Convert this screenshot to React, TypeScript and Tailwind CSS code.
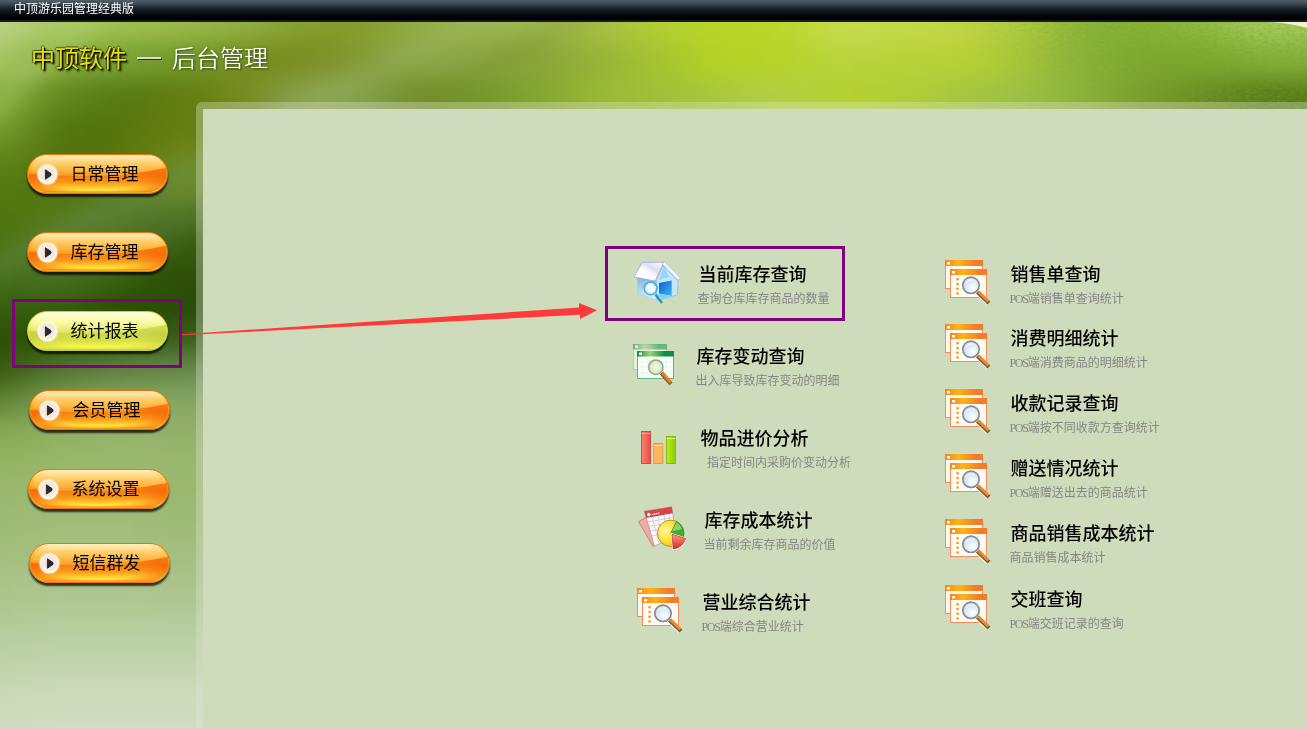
import type { ReactNode } from "react";
import clsx from "clsx";

type MenuItem = { label: string; place: string; active?: boolean };

type Report = {
  title: string;
  desc: string;
  pos?: boolean;
  icon: ReactNode;
  row: string;
  text: string;
  descShift?: string;
};

const menu: MenuItem[] = [
  { label: "日常管理", place: "mt-[52px] ml-[27px]" },
  { label: "库存管理", place: "mt-[38px] ml-[27px]" },
  { label: "统计报表", place: "mt-[39px] ml-[27px]", active: true },
  { label: "会员管理", place: "mt-[39px] ml-[29px]" },
  { label: "系统设置", place: "mt-[39px] ml-[28px]" },
  { label: "短信群发", place: "mt-[34px] ml-[29px]" },
];

const stockReports: Report[] = [
  { title: "当前库存查询", desc: "查询仓库库存商品的数量", icon: <HouseIcon />, row: "h-[82px]", text: "ml-[17px]" },
  { title: "库存变动查询", desc: "出入库导致库存变动的明细", icon: <GreenWindowsIcon />, row: "h-[82px]", text: "ml-[15px]" },
  { title: "物品进价分析", desc: "指定时间内采购价变动分析", icon: <BarsIcon />, row: "h-[82px] pl-1", text: "ml-[15px]", descShift: "ml-[7.5px]" },
  { title: "库存成本统计", desc: "当前剩余库存商品的价值", icon: <PieIcon />, row: "h-[82px] pl-1.5", text: "ml-[17px]" },
  { title: "营业综合统计", desc: "端综合营业统计", pos: true, icon: <WindowsIcon />, row: "h-[82px] pl-1", text: "ml-[17px]" },
];

const salesReports: Report[] = [
  { title: "销售单查询", desc: "端销售单查询统计", pos: true, icon: <WindowsIcon />, row: "h-16", text: "ml-[17px]" },
  { title: "消费明细统计", desc: "端消费商品的明细统计", pos: true, icon: <WindowsIcon />, row: "h-[65px]", text: "ml-[17px]" },
  { title: "收款记录查询", desc: "端按不同收款方查询统计", pos: true, icon: <WindowsIcon />, row: "h-[65px]", text: "ml-[17px]" },
  { title: "赠送情况统计", desc: "端赠送出去的商品统计", pos: true, icon: <WindowsIcon />, row: "h-[65px]", text: "ml-[17px]" },
  { title: "商品销售成本统计", desc: "商品销售成本统计", icon: <WindowsIcon />, row: "h-[66px]", text: "ml-[17px]" },
  { title: "交班查询", desc: "端交班记录的查询", pos: true, icon: <WindowsIcon />, row: "h-16", text: "ml-[17px]" },
];

// Colour samples of the leaf backdrop, blended together by a blur
const headerTop = "#bcd284 #a9c95f #9fc14e #9aba48 #92b040 #85a02e #8aa232 #93ac40 #9bb350 #a0b850 #a9bf45 #b4ce30 #bbd628 #bad628 #c8dc50 #c4da48 #c2d445 #b0cc40 #8ab43a #84b234 #8fbb40 #a6cc5c".split(" ");
const headerMid = "#a8c566 #88ae3c #78a232 #719a2a #738f22 #7f9028 #829832 #8ba64a #8ba645 #8aa438 #96b438 #a6c430 #b6d225 #b8d32a #bad440 #b8d23c #b8d235 #a8c63a #8bb23c #7caa32 #7aa82e #84b03c".split(" ");
const headerLow = "#8aae3e #628820 #567a14 #617d12 #788c20 #87a04c #84a04c #74902c #76962a #84a530 #9aba35 #a0c038 #a8c83c #b4d044 #b6d030 #b2ce34 #a6c63e #9cc044 #8eb43c #7a9d2e #6a8e24 #587c18".split(" ");
const side = [
  ["#7a9e30", "#517410", "#54720e", "#687e14"],
  ["#5f8519", "#52740f", "#58760f", "#6f8a1c"],
  ["#547a10", "#53760f", "#5c7d20", "#6a8a2c"],
  ["#50760f", "#567a1c", "#557a2e", "#4c7426"],
  ["#4b7212", "#50762a", "#4d7228", "#3a5e12"],
  ["#44701c", "#496e24", "#38600f", "#2c5006"],
  ["#35600f", "#365c0c", "#2c5004", "#2a4c06"],
  ["#2c5004", "#2f5208", "#335810", "#3c601c"],
  ["#37590c", "#507630", "#5f8440", "#64884a"],
  ["#5c8030", "#7b9d54", "#84a65e", "#85a562"],
  ["#84a650", "#8dae60", "#94b26a", "#92b068"],
  ["#92b260", "#98b76a", "#9ab96e", "#98b66c"],
  ["#98b86a", "#9cba72", "#9cba70", "#9ab86e"],
  ["#9cba72", "#a0bd78", "#a0bd78", "#9ebb76"],
  ["#a2be7c", "#a5c080", "#a5c080", "#a3be7e"],
  ["#a8c286", "#abc48a", "#abc48a", "#a9c288"],
  ["#afc790", "#b2c996", "#b2c996", "#b1c894"],
  ["#b8cda0", "#bbcfa4", "#bbcfa4", "#bbcfa4"],
  ["#c1d3ac", "#c4d5b0", "#c4d5b0", "#c4d5b0"],
  ["#cad9b8", "#cddbbc", "#cddbbc", "#cddbbc"],
  ["#cfdcbf", "#d0ddc0", "#d0ddc0", "#d0ddc0"],
  ["#cfdcbf", "#d0ddc0", "#d0ddc0", "#d0ddc0"],
];

function HeaderRow({ colors, y, height }: { colors: string[]; y: number; height: number }) {
  return colors.map((c, i) => (
    <rect key={i} x={i === 0 ? -130 : i * 60 - 30} y={y} width={i === 0 ? 161 : i === colors.length - 1 ? 160 : 61} height={height} fill={c} />
  ));
}

function Backdrop() {
  return (
    <svg className="absolute inset-0 -z-10" width="1307" height="729" viewBox="0 0 1307 729" aria-hidden="true">
      <defs>
        <filter id="soft" filterUnits="userSpaceOnUse" x="-130" y="-60" width="1570" height="880" colorInterpolationFilters="sRGB">
          <feGaussianBlur stdDeviation="25 11" />
        </filter>
        <filter id="streak" filterUnits="userSpaceOnUse" x="-100" y="-60" width="900" height="500" colorInterpolationFilters="sRGB">
          <feGaussianBlur stdDeviation="10" />
        </filter>
        <filter id="grain" x="0" y="0" width="100%" height="100%">
          <feTurbulence type="fractalNoise" baseFrequency="0.22 0.5" numOctaves="3" seed="4" />
          <feColorMatrix values="0 0 0 0 0.2  0 0 0 0 0.35  0 0 0 0 0.02  1.6 0 0 0 -0.6" />
        </filter>
        <linearGradient id="grainFade" x1="0" x2="1" y1="0.3" y2="0">
          <stop offset="0.1" stopColor="#000" />
          <stop offset="0.45" stopColor="#fff" />
        </linearGradient>
        <mask id="grainMask">
          <rect x="940" y="22" width="367" height="87" fill="url(#grainFade)" />
        </mask>
      </defs>
      <g filter="url(#soft)">
        <HeaderRow colors={headerTop} y={-60} height={102} />
        <HeaderRow colors={headerMid} y={42} height={37} />
        <HeaderRow colors={headerLow} y={78} height={80} />
        {side.map((row, r) => row.map((c, i) => (
          <rect
            key={`${r}-${i}`}
            x={i === 0 ? -130 : i * 60 - 30}
            y={r * 30 + 114}
            width={i === 0 ? 161 : i === 3 ? 150 : 61}
            height={r === side.length - 1 ? 90 : 31}
            fill={c}
          />
        )))}
      </g>
      <g filter="url(#streak)" fill="none">
        <path d="M270 125L500 5" stroke="#a4bd70" strokeWidth="20" opacity="0.3" />
        <path d="M375 130L600 5" stroke="#6f8a20" strokeWidth="18" opacity="0.28" />
        <path d="M120 145L400 0" stroke="#76820a" strokeWidth="24" opacity="0.22" />
        <path d="M-20 120L110 0" stroke="#b8d480" strokeWidth="18" opacity="0.3" />
        <path d="M-10 268L215 160" stroke="#6c8e50" strokeWidth="20" opacity="0.4" />
        <path d="M-10 215L215 95" stroke="#567a08" strokeWidth="18" opacity="0.2" />
        <path d="M90 345L215 235" stroke="#2a4c04" strokeWidth="22" opacity="0.35" />
      </g>
      <rect x="940" y="22" width="367" height="87" filter="url(#grain)" mask="url(#grainMask)" opacity="0.55" />
      <path d="M1268 22H1307V28Q1288 23 1268 22Z" fill="#f0f2cc" />
    </svg>
  );
}

function PlayBadge() {
  return (
    <svg className="ml-2 size-[23px] shrink-0" viewBox="0 0 23 23">
      <circle cx="11.5" cy="11.5" r="11" fill="#fff" opacity="0.3" />
      <circle cx="11.4" cy="11.5" r="9.8" fill="#fbf7ef" />
      <circle cx="11.4" cy="10.9" r="8" fill="#f5e9dd" />
      <path d="M9.4 6.8V16.2L15 12.4V10.6Z" fill="#29292b" stroke="#29292b" strokeLinejoin="round" />
    </svg>
  );
}

function MenuButton({ label, place, active }: MenuItem) {
  return (
    <button
      className={clsx(
        "relative flex h-10 w-[141px] shrink-0 items-center overflow-visible rounded-full border text-left shadow-[0_3px_2px_rgba(0,0,0,0.75)]",
        place,
        active
          ? "border-[#c5cf3c] bg-[linear-gradient(180deg,#ffffd8_0%,#fbfc96_26%,#e6ee68_43%,#d0da48_58%,#d6df48_75%,#fcfa50_94%,#d2c92c_100%)]"
          : "border-[#f26f08] bg-[linear-gradient(180deg,#fff0bd_0%,#ffca5c_20%,#fca91c_42%,#f7840e_57%,#fb981a_73%,#ffe840_93%,#f89414_100%)]",
      )}
    >
      <svg className="absolute inset-0 size-full" viewBox="0 0 139 38" preserveAspectRatio="none">
        <defs>
          <radialGradient id={active ? "edgeOn" : "edgeOff"} cx="0.5" cy="0.62" r="0.55">
            <stop offset="0.55" stopColor={active ? "#b9c63a" : "#f76409"} stopOpacity="0" />
            <stop offset="1" stopColor={active ? "#b9c63a" : "#f76409"} stopOpacity={active ? 0.5 : 0.75} />
          </radialGradient>
        </defs>
        <path d="M1 19Q70 26 138 13V20Q136 37 119 37H20Q2 37 1 19Z" fill={active ? "url(#edgeOn)" : "url(#edgeOff)"} />
        <path d="M18 2H121Q132 3 136 12Q112 21 70 21Q20 22 3 17Q6 4 18 2Z" fill="#fff" opacity="0.13" />
      </svg>
      <span className="relative flex items-center">
        <PlayBadge />
        <span className="ml-[11.5px] pb-0.5 text-[17px] leading-6 text-black">{label}</span>
      </span>
    </button>
  );
}

function WindowsIcon() {
  return (
    <svg className="-mt-px size-12 shrink-0" viewBox="0 0 48 48">
      <defs>
        <linearGradient id="orangeBar">
          <stop offset="0" stopColor="#f78222" />
          <stop offset="0.35" stopColor="#ffb414" />
          <stop offset="0.8" stopColor="#f47b2a" />
        </linearGradient>
        <radialGradient id="lens" cx="0.6" cy="0.65" r="0.7">
          <stop offset="0" stopColor="#fff" />
          <stop offset="1" stopColor="#c3dcec" />
        </radialGradient>
      </defs>
      <rect x="1.5" y="1.5" width="37" height="28" fill="#fdf8ec" stroke="#f58a5c" />
      <rect x="1" y="1" width="38" height="6" fill="url(#orangeBar)" />
      <rect x="3" y="3" width="3" height="2.5" fill="#fff" />
      <rect x="6.5" y="10.5" width="36" height="28" fill="#fffaf2" stroke="#f58a5c" />
      <rect x="6" y="10" width="37" height="6" fill="url(#orangeBar)" />
      <rect x="8" y="12" width="3" height="2.5" fill="#fff" />
      <g fill="#f39a1c">
        <circle cx="13.6" cy="20.3" r="1.3" />
        <circle cx="13.6" cy="25" r="1.3" />
        <circle cx="13.6" cy="29.8" r="1.3" />
        <circle cx="13.6" cy="34.5" r="1.3" />
      </g>
      <path d="M33 33L44.5 44" stroke="#fff" strokeWidth="5.5" />
      <path d="M33.5 33L45 44" stroke="#6e5440" strokeWidth="4.2" />
      <path d="M34 32.6L44.4 42.6" stroke="#f28a1c" strokeWidth="2.8" />
      <circle cx="27" cy="26.3" r="8.2" fill="url(#lens)" stroke="#858d93" strokeWidth="1.7" />
      <path d="M21.5 24Q25 19.5 30 21" fill="none" stroke="#fff" opacity="0.8" />
    </svg>
  );
}

function GreenWindowsIcon() {
  return (
    <svg className="mt-px size-12 shrink-0" viewBox="0 0 48 48">
      <defs>
        <linearGradient id="greenBar">
          <stop offset="0" stopColor="#0b8a48" />
          <stop offset="0.35" stopColor="#a3cf7a" />
          <stop offset="0.75" stopColor="#0a8f48" />
        </linearGradient>
        <radialGradient id="greenLens">
          <stop offset="0" stopColor="#fbfde8" />
          <stop offset="1" stopColor="#cfe6b4" />
        </radialGradient>
      </defs>
      <g opacity="0.65">
        <rect x="1.5" y="1.5" width="33" height="25" fill="#f0faf0" stroke="#8ccda8" />
        <rect x="1" y="1" width="34" height="5.5" fill="url(#greenBar)" opacity="0.8" />
        <rect x="3" y="2.6" width="3" height="2.2" fill="#fff" />
      </g>
      <rect x="5.5" y="8.5" width="36" height="27" fill="#f9fdf7" stroke="#5cb884" />
      <path d="M10 14V35M16 14V35M22 14V35M28 14V35M34 14V35M6 19H41M6 24H41M6 30H41" stroke="#e6f2e6" strokeWidth="0.7" />
      <rect x="5" y="8" width="37" height="5.5" fill="url(#greenBar)" />
      <rect x="7" y="9.6" width="3" height="2.2" fill="#fff" />
      <path d="M29.5 30L39 40.8" stroke="#8a5730" strokeWidth="4.2" />
      <path d="M30.5 30L38.8 39.5" stroke="#f5821c" strokeWidth="2.7" />
      <circle cx="23.8" cy="24.2" r="7.2" fill="url(#greenLens)" stroke="#94a394" strokeWidth="1.5" />
    </svg>
  );
}

function HouseIcon() {
  return (
    <svg className="size-12 shrink-0" viewBox="0 0 48 48">
      <defs>
        <linearGradient id="roof" x1="0" y1="1" x2="1" y2="0">
          <stop offset="0" stopColor="#fff" />
          <stop offset="0.45" stopColor="#fdfdff" />
          <stop offset="0.65" stopColor="#dcdff0" />
          <stop offset="1" stopColor="#fff" />
        </linearGradient>
        <linearGradient id="wall" x1="0" y1="0" x2="0" y2="1">
          <stop offset="0" stopColor="#7eb0dc" />
          <stop offset="1" stopColor="#dceffc" />
        </linearGradient>
        <linearGradient id="door" x1="0" y1="0" x2="1" y2="1">
          <stop offset="0" stopColor="#0a62c4" />
          <stop offset="1" stopColor="#3eb4fa" />
        </linearGradient>
      </defs>
      <path d="M5 16L24 20V40L6 33.5Z" fill="url(#wall)" stroke="#a8c8e4" strokeWidth="0.6" />
      <path d="M32 4L46 20L45.5 35L24.5 40V20Z" fill="#c4e6fc" stroke="#7cbcec" strokeWidth="0.7" />
      <path d="M32 6L37 17L27 20Z" fill="#9ad4fa" />
      <path d="M27 23L39.7 20.5V36L27 33.5Z" fill="url(#door)" />
      <path d="M27 33.5L39.7 36L31 38.5L26 36Z" fill="#7dd0fc" />
      <path d="M10.3 2.3H32L23 21L2 17Z" fill="url(#roof)" stroke="#9a9fc8" strokeWidth="0.7" />
      <path d="M31 2.8L47 19.5" stroke="#7faad4" strokeWidth="3.6" />
      <path d="M31.4 2.8L47 19" stroke="#fff" strokeWidth="2.6" />
      <path d="M23.5 34.5L30 43" stroke="#1597c4" strokeWidth="2.2" />
      <circle cx="18.6" cy="28.3" r="6.3" fill="#f2fbff" stroke="#3fb0da" strokeWidth="1.6" />
      <circle cx="18.6" cy="28.3" r="4.9" fill="none" stroke="#c4eafa" />
    </svg>
  );
}

function BarsIcon() {
  return (
    <svg className="size-12 shrink-0" viewBox="0 0 48 48">
      <defs>
        <linearGradient id="barRed">
          <stop offset="0" stopColor="#f98372" />
          <stop offset="1" stopColor="#e94d3e" />
        </linearGradient>
        <linearGradient id="barGreen">
          <stop offset="0" stopColor="#b8ee1c" />
          <stop offset="1" stopColor="#8acc08" />
        </linearGradient>
      </defs>
      <rect x="5.5" y="7.5" width="9" height="32" fill="url(#barRed)" stroke="#d64a3e" />
      <path d="M5.5 9.5H14.5" stroke="#ffb0a4" />
      <rect x="17.8" y="19.5" width="9" height="20" fill="#ffb65c" stroke="#ee9440" />
      <path d="M18 21.5H27" stroke="#ffdca8" />
      <rect x="30.5" y="12.5" width="9" height="27" fill="url(#barGreen)" stroke="#84bc14" />
      <path d="M30.5 14.5H39.5" stroke="#dcfa7c" />
    </svg>
  );
}

function PieIcon() {
  return (
    <svg className="size-12 shrink-0" viewBox="0 0 48 48">
      <defs>
        <radialGradient id="pieYellow" cx="0.3" cy="0.4" r="0.8">
          <stop offset="0" stopColor="#fff8a0" />
          <stop offset="0.5" stopColor="#fbe030" />
          <stop offset="1" stopColor="#e8a80a" />
        </radialGradient>
        <linearGradient id="pieRed" x1="0" y1="0" x2="0" y2="1">
          <stop offset="0" stopColor="#ff9a84" />
          <stop offset="1" stopColor="#e0281c" />
        </linearGradient>
      </defs>
      <path d="M0.5 15.5L8 11.5L19 38L15 40.5Z" fill="#f3a8a0" stroke="#b87068" strokeWidth="0.7" />
      <path d="M6.3 5.2L33.7 0.8L38 30L16.5 40Z" fill="#fafafa" stroke="#9a9a9a" strokeWidth="0.7" />
      <path d="M6.3 5.2L33.7 0.8L34.8 7.2L8.2 12Z" fill="#d9444a" />
      <circle cx="10.8" cy="8.5" r="1.7" fill="#fff" />
      <path d="M14 8.5L21.5 7" stroke="#fff" strokeWidth="1.2" strokeDasharray="1.5 0.6" />
      <path d="M9.5 16L35 11.5M11 20.5L36 16M12.5 25L30 22M14 30L24 28M14 11L21 37M20 10L24 35M26 9L28 20M31 8L32 18" stroke="#bcc0c8" strokeWidth="0.7" />
      <circle cx="32.7" cy="27.3" r="13.2" fill="url(#pieYellow)" stroke="#a88420" strokeWidth="0.8" />
      <path d="M32.7 27.3L38.5 15.4A13.2 13.2 0 0 1 45.3 31Z" fill="#3fae28" stroke="#2c7c18" strokeWidth="0.6" />
      <path d="M33.8 25.5L38.7 16.6A12 12 0 0 1 44 23Z" fill="#b6e4a0" opacity="0.65" />
      <path d="M34 28.2L47.6 32.5Q45 41.5 35.2 43Z" fill="url(#pieRed)" stroke="#fff" strokeWidth="2" />
      <path d="M34 28.2L47.6 32.5Q45 41.5 35.2 43Z" fill="url(#pieRed)" stroke="#a83c30" strokeWidth="0.7" />
    </svg>
  );
}

function ReportLink({ title, desc, pos, icon, row, text, descShift }: Report) {
  return (
    <div className={clsx("flex items-start", row)}>
      {icon}
      <div className={clsx("whitespace-nowrap", text)}>
        <h2 className="mb-px pt-px pl-[1.5px] text-[18px] leading-6 font-medium text-black">{title}</h2>
        <p className={clsx("pl-[0.5px] text-xs leading-6 text-[#858585]", descShift)}>
          {pos && <span className="font-['Liberation_Serif',serif] tracking-[-1.3px]">POS</span>}
          {desc}
        </p>
      </div>
    </div>
  );
}

export default function App() {
  return (
    <div className="relative isolate flex h-[729px] w-[1307px] flex-col overflow-hidden font-['Noto_Sans_CJK_SC',sans-serif]">
      <Backdrop />
      <div className="h-[22px] shrink-0 border-b-2 border-[#151c28] bg-[linear-gradient(180deg,#545e68_0%,#3a444e_22%,#17222d_42%,#0b1218_62%,#000_90%)] pl-[14px] text-xs leading-[15px] text-white">
        中顶游乐园管理经典版
      </div>
      <header className="flex h-20 shrink-0 items-start pt-[17px] pl-[31px] text-2xl leading-9">
        <span className="text-[#e6df18] [text-shadow:1px_1px_1px_#000,2px_2px_2px_#1c2600,-1px_0_1px_#4c5200,0_-1px_1px_#4c5200]">中顶软件</span>
        <span className="mt-[18px] ml-[10px] h-0.5 w-6 bg-[#dadade] shadow-[1px_1px_0_#2c3a10]" />
        <span className="ml-[11px] font-light text-white [text-shadow:0_0_1px_#fff,1px_1px_2px_#2c3c08,0_0_3px_#4c6018]">后台管理</span>
      </header>
      <div className="flex min-h-0 flex-1">
        <nav className="flex w-[196px] shrink-0 flex-col">
          {menu.map((item) => <MenuButton key={item.label} {...item} />)}
        </nav>
        <div className="flex-1 rounded-tl-md bg-[#dfe6d4]/35 pt-[7px] pl-[7px]">
          <main className="flex h-full bg-[#cfdcbc] pt-[151px] pl-[429px]">
            <div className="w-[312px]">
              {stockReports.map((r) => <ReportLink key={r.title} {...r} />)}
            </div>
            <div>
              {salesReports.map((r) => <ReportLink key={r.title} {...r} />)}
            </div>
          </main>
        </div>
      </div>

      {/* Walkthrough marks over the page */}
      <div className="pointer-events-none absolute top-[299px] left-[12px] h-[69px] w-[170px] border-3 border-[#800080]" />
      <div className="pointer-events-none absolute top-[246px] left-[605px] h-[75px] w-[240px] border-3 border-[#800080]" />
      <svg className="pointer-events-none absolute top-[299px] left-[182px]" width="416" height="40" viewBox="182 299 416 40">
        <path d="M182 334.3L579 307.5V303L597 310.3L580 319V314.8L182 335.3Z" fill="#ff3a3a" />
      </svg>
    </div>
  );
}
